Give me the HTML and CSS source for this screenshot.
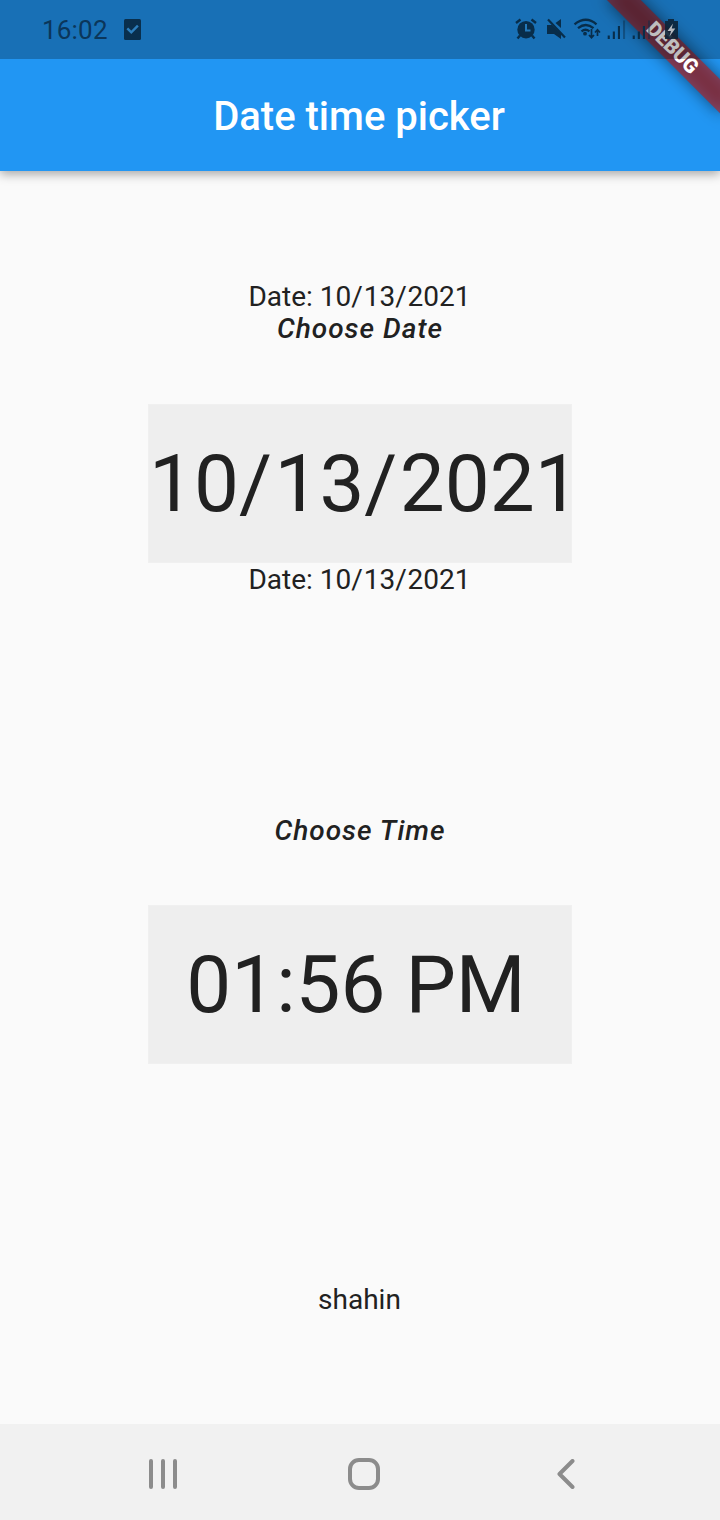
FILE: index.html
```html
<!DOCTYPE html>
<html lang="en">
<head>
<meta charset="utf-8">
<title>Date time picker</title>
<link rel="stylesheet" href="styles.css">
</head>
<body>
<div class="screen">
  <div class="ribbon-clip"><div class="ribbon"><span class="ribbon-text">DEBUG</span></div></div>
  <div class="status-bar">
    <div class="status-left">
      <span class="clock">16:02</span>
      <svg class="check-icon" width="17" height="22" viewBox="0 0 17 22"><rect width="17" height="21" rx="1.5" fill="#092f4d"/><path d="M3.3 9.4l4 4 6.600-6.800" fill="none" stroke="#2d7fbd" stroke-width="2.400"/></svg>
    </div>
    <svg class="status-icons" width="170" height="24" viewBox="514 17 170 24">
      <g fill="#082d4a" stroke="#082d4a">
        <circle cx="526" cy="29.700" r="8.700" stroke="none"/>
        <path d="M516 23l4.500-3.500M536 23l-4.500-3.500M520 35.500l-2.500 3M532 35.500l2.500 3" stroke-width="2.400" fill="none"/>
        <path d="M526 24v6.500h4.500" stroke="#2378b9" stroke-width="2" fill="none"/>
        <path d="M547 25h5l9 9v5l-7-5h-7zM555.500 23l5.500-4v9z" stroke="none"/>
        <path d="M548 19.500l17 18" stroke-width="2.200" fill="none"/>
        <g fill="none" stroke-width="2.300"><path d="M574.500 24.300q11.500-9 22 0M578 28.200q8-6.400 15.500 0M581.500 31.300q4-3 8 0"/></g>
        <circle cx="585" cy="33.700" r="1.900" stroke="none"/>
        <path d="M591.500 29v8M589 35l2.500 2.800L594 35M597.500 36v-6M595 32.500l2.500-2.800 2.500 2.800" stroke-width="1.700" fill="none"/>
        <g stroke="none"><path d="M607.700 35.500h2.100V39h-2.100zM612.800 31.500h2.100V39h-2.100zM617.900 26h2.100v13h-2.100z"/><path d="M623 20.500h2.100V39H623z" opacity=".45"/>
        <path d="M632.700 35.500h2.100V39h-2.100zM637.800 31.500h2.100V39h-2.100zM642.900 26h2.100v13h-2.100z"/><path d="M648 20.500h2.100V39H648z" opacity=".45"/></g>
        <path d="M668 19h6v2h4v18h-13V21h3z" stroke="none" fill="#0b2235" opacity=".88"/>
        <path d="M673 23.500l-5.500 7.500h3.500l-1.500 5.500 5.800-8h-3.600z" stroke="none" fill="#b6babf"/>
      </g>
    </svg>
  </div>
  <header class="app-bar"><h1 class="title">Date time picker</h1></header>
  <main class="content">
    <p class="label">Date: 10<span class="slash">/</span>13<span class="slash">/</span>2021</p>
    <p class="heading">Choose Date</p>
    <div class="field date-field"><span class="value">10<span class="slash">/</span>13<span class="slash">/</span>2021</span></div>
    <p class="label">Date: 10<span class="slash">/</span>13<span class="slash">/</span>2021</p>
    <p class="heading time-heading">Choose Time</p>
    <div class="field time-field"><span class="value">01:56 PM</span></div>
    <p class="label footer-label">shahin</p>
  </main>
  <nav class="nav-bar">
    <svg width="28" height="30" viewBox="0 0 28 30"><path d="M2 2v26M14 2v26M26 2v26" class="nav-stroke"/></svg>
    <svg class="home-icon" width="32" height="32" viewBox="0 0 32 32"><rect x="2" y="2" width="28" height="28" rx="9" class="nav-stroke"/></svg>
    <svg width="18" height="30" viewBox="0 0 18 30"><path d="M15.500 2L2.500 15l13 13" class="nav-stroke"/></svg>
  </nav>
</div>
</body>
</html>
```
FILE: styles.css
```css
body { margin: 0; }
p, h1 { margin: 0; }
.screen {
  position: relative;
  display: flex;
  flex-direction: column;
  width: 720px;
  height: 1520px;
  overflow: hidden;
  background: #fafafa;
  color: #212121;
  font-family: Roboto, sans-serif;
}
.status-bar {
  position: relative;
  z-index: 3;
  display: flex;
  justify-content: space-between;
  box-sizing: border-box;
  height: 59px;
  padding: 17px 36px 0 42px;
  background: rgba(0, 0, 0, .25);
}
.status-left { display: flex; gap: 16px; }
.clock { font-size: 26px; line-height: 26px; letter-spacing: .2px; color: #0b365a; }
.check-icon { margin-top: 2px; }
.app-bar {
  position: relative;
  z-index: 1;
  display: flex;
  justify-content: center;
  align-items: center;
  height: 171px;
  margin-top: -59px;
  padding: 63px 2px 0 0;
  box-sizing: border-box;
  background: #2196f3;
  box-shadow: 0 3px 10px rgba(0, 0, 0, .35);
}
.title { color: #fff; font-size: 40px; font-weight: 500; line-height: 48px; }
.ribbon-clip {
  position: absolute;
  z-index: 2;
  top: 0;
  right: 0;
  width: 200px;
  height: 200px;
  overflow: hidden;
}
/* The ribbon pivots around the top right corner of the screen. */
.ribbon {
  position: absolute;
  left: 120px;
  top: 56px;
  width: 160px;
  height: 24px;
  transform-origin: 80px -56px;
  transform: rotate(45deg);
  text-align: center;
}
.ribbon::before, .ribbon::after { content: ""; position: absolute; inset: 0; }
.ribbon::before { background: rgba(0, 0, 0, .5); filter: blur(7.900px); }
.ribbon::after { background: rgba(183, 28, 28, .627); }
.ribbon-text {
  position: relative;
  z-index: 1;
  display: block;
  color: #fff;
  font-size: 20.400px;
  font-weight: 900;
  letter-spacing: -.4px;
  line-height: 23px;
}
.content {
  flex: 1;
  display: flex;
  flex-direction: column;
  align-items: center;
  padding-top: 110px;
}
.label { font-size: 28px; line-height: 32px; padding-right: 1px; }
.slash { letter-spacing: .031em; }
.heading { font-size: 28px; line-height: 32px; font-weight: 500; font-style: italic; letter-spacing: 1px; }
.field {
  display: flex;
  justify-content: center;
  align-items: center;
  box-sizing: border-box;
  width: 424px;
  height: 159px;
  margin: 59px 0 1px;
  padding-top: 1px;
  border: 1px solid #f0f0f0;
  background: #eee;
}
.value { font-size: 80px; line-height: 94px; white-space: nowrap; }
.date-field { justify-content: flex-start; }
.time-heading { margin-top: 219px; }
.time-field { margin-top: 58px; padding-right: 8px; }
.footer-label { margin-top: 219px; }
.nav-bar {
  display: flex;
  justify-content: space-between;
  align-items: center;
  box-sizing: border-box;
  height: 96px;
  padding: 4px 145px 0 149px;
  background: #f1f1f1;
}
.home-icon { margin-right: 6px; }
.nav-stroke { fill: none; stroke: #8c8c8c; stroke-width: 4; stroke-linecap: round; stroke-linejoin: round; }
```
